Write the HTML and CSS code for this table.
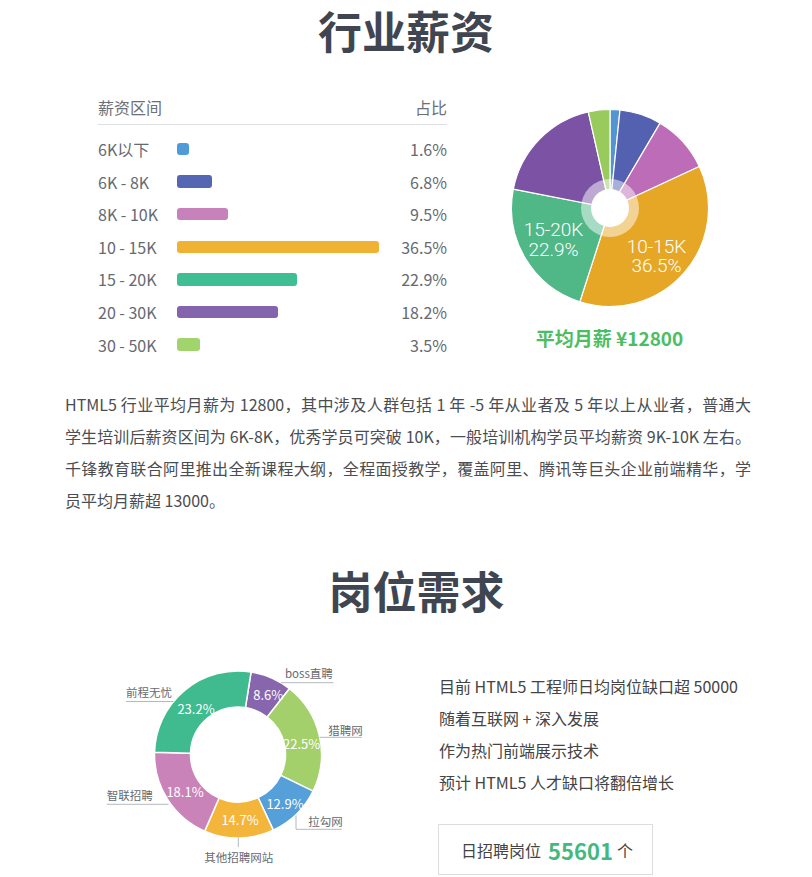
FILE: index.html
```html
<!DOCTYPE html>
<html lang="zh-CN">
<head>
<meta charset="utf-8">
<title>行业薪资 · 岗位需求</title>
<link rel="stylesheet" href="styles.css">
</head>
<body>
<section class="salary">
  <h2 class="title">行业薪资</h2>
  <div class="salary-body">
    <div class="table">
      <div class="thead"><span>薪资区间</span><span>占比</span></div>
      <div class="rows">
        <div class="row"><span class="label">6K以下</span><span class="track"><span class="bar c-blue" style="width:12px"></span></span><span class="pct">1.6%</span></div>
        <div class="row"><span class="label">6K - 8K</span><span class="track"><span class="bar c-indigo" style="width:35.3px"></span></span><span class="pct">6.8%</span></div>
        <div class="row"><span class="label">8K - 10K</span><span class="track"><span class="bar c-pink" style="width:51px"></span></span><span class="pct">9.5%</span></div>
        <div class="row"><span class="label">10 - 15K</span><span class="track"><span class="bar c-orange" style="width:202px"></span></span><span class="pct">36.5%</span></div>
        <div class="row"><span class="label">15 - 20K</span><span class="track"><span class="bar c-teal" style="width:120.3px"></span></span><span class="pct">22.9%</span></div>
        <div class="row"><span class="label">20 - 30K</span><span class="track"><span class="bar c-purple" style="width:101.3px"></span></span><span class="pct">18.2%</span></div>
        <div class="row"><span class="label">30 - 50K</span><span class="track"><span class="bar c-lime" style="width:22.7px"></span></span><span class="pct">3.5%</span></div>
      </div>
    </div>
    <div class="pie-box">
      <svg class="pie" width="220" height="220" viewBox="499.5 98.3 220 220">
        <g class="pie-slices">
          <path class="p-blue" d="M609.5 208.3 L609.5 109.8 A98.5 98.5 0 0 1 619.49 110.31 Z"/>
          <path class="p-indigo" d="M609.5 208.3 L619.49 110.31 A98.5 98.5 0 0 1 659.57 123.47 Z"/>
          <path class="p-pink" d="M609.5 208.3 L659.57 123.47 A98.5 98.5 0 0 1 698.84 166.81 Z"/>
          <path class="p-orange" d="M609.5 208.3 L698.84 166.81 A98.5 98.5 0 0 1 579.35 302.07 Z"/>
          <path class="p-green" d="M609.5 208.3 L579.35 302.07 A98.5 98.5 0 0 1 512.84 189.35 Z"/>
          <path class="p-purple" d="M609.5 208.3 L512.84 189.35 A98.5 98.5 0 0 1 587.79 112.22 Z"/>
          <path class="p-lime" d="M609.5 208.3 L587.79 112.22 A98.5 98.5 0 0 1 609.5 109.8 Z"/>
        </g>
        <circle class="pie-ring" cx="609.5" cy="208.3" r="29"/>
        <circle class="pie-hole" cx="609.5" cy="208.3" r="19"/>
        <text class="pie-label" x="553" y="229"><tspan x="553">15-20K</tspan><tspan x="553" dy="20">22.9%</tspan></text>
        <text class="pie-label" x="656" y="246"><tspan x="656">10-15K</tspan><tspan x="656" dy="19.5">36.5%</tspan></text>
      </svg>
      <p class="avg">平均月薪 ¥12800</p>
    </div>
  </div>
  <p class="desc"><span class="line">HTML5 行业平均月薪为 12800，其中涉及人群包括 1 年 -5 年从业者及 5 年以上从业者，普通大</span><span class="line">学生培训后薪资区间为 6K-8K，优秀学员可突破 10K，一般培训机构学员平均薪资 9K-10K 左右。</span><span class="line">千锋教育联合阿里推出全新课程大纲，全程面授教学，覆盖阿里、腾讯等巨头企业前端精华，学</span><span class="line last">员平均月薪超 13000。</span></p>
</section>

<section class="jobs">
  <h2 class="title title-jobs">岗位需求</h2>
  <div class="jobs-body">
    <svg class="donut" width="270" height="217" viewBox="100 660 270 217">
      <g class="donut-slices">
        <path class="d-purple" d="M251.06 672.03 A83.5 83.5 0 0 1 289.41 688.70 L267.25 717.07 A47.5 47.5 0 0 0 245.43 707.58 Z"/>
        <path class="d-lime" d="M289.41 688.70 A83.5 83.5 0 0 1 313.05 791.11 L280.69 775.32 A47.5 47.5 0 0 0 267.25 717.07 Z"/>
        <path class="d-blue" d="M313.05 791.11 A83.5 83.5 0 0 1 273.29 830.18 L258.07 797.55 A47.5 47.5 0 0 0 280.69 775.32 Z"/>
        <path class="d-orange" d="M273.29 830.18 A83.5 83.5 0 0 1 204.71 831.08 L219.06 798.06 A47.5 47.5 0 0 0 258.07 797.55 Z"/>
        <path class="d-pink" d="M204.71 831.08 A83.5 83.5 0 0 1 154.53 752.31 L190.52 753.26 A47.5 47.5 0 0 0 219.06 798.06 Z"/>
        <path class="d-teal" d="M154.53 752.31 A83.5 83.5 0 0 1 251.06 672.03 L245.43 707.58 A47.5 47.5 0 0 0 190.52 753.26 Z"/>
      </g>
      <g class="donut-values">
        <text x="196" y="708.3">23.2%</text>
        <text x="268.3" y="694.3">8.6%</text>
        <text x="301.7" y="743.3">22.5%</text>
        <text x="285" y="803.3">12.9%</text>
        <text x="240" y="819.3">14.7%</text>
        <text x="185" y="791.7">18.1%</text>
      </g>
      <g class="donut-lines">
        <path d="M281 682.7 H333.5"/>
        <path d="M319.5 737.3 H361.7"/>
        <path d="M126 701.5 H173.5"/>
        <path d="M106.7 804.3 H168.5"/>
        <path d="M296 815.5 V829.3 H341.7"/>
        <path d="M238.3 837.5 V847"/>
      </g>
      <g class="donut-names">
        <text x="285" y="673.3">boss直聘</text>
        <text x="328.3" y="729.5">猎聘网</text>
        <text x="126" y="691.5">前程无忧</text>
        <text x="106.7" y="795">智联招聘</text>
        <text x="308.3" y="820.5">拉勾网</text>
        <text class="mid" x="238.8" y="856.5">其他招聘网站</text>
      </g>
    </svg>
    <div class="jobs-info">
      <ul class="jobs-list">
        <li>目前 HTML5 工程师日均岗位缺口超 50000</li>
        <li>随着互联网 + 深入发展</li>
        <li>作为热门前端展示技术</li>
        <li>预计 HTML5 人才缺口将翻倍增长</li>
      </ul>
      <div class="daily"><span>日招聘岗位</span><strong>55601</strong><span>个</span></div>
    </div>
  </div>
</section>
</body>
</html>
```

FILE: styles.css
```css
* {
  box-sizing: border-box;
}

body {
  margin: 0;
  font-family: "Noto Sans CJK SC", "Noto Sans", sans-serif;
  color: #444;
  background: #fff;
}

.title {
  margin: 1.5px 0 0;
  font-size: 44px;
  line-height: 56px;
  font-weight: 700;
  color: #3f4651;
  text-align: center;
}

/* ---------- salary ---------- */
.salary-body {
  display: flex;
  align-items: flex-start;
  margin-top: 37.5px;
  padding-left: 98px;
}

.table {
  width: 349px;
}

.thead {
  display: flex;
  justify-content: space-between;
  font-size: 16px;
  line-height: 24px;
  padding-bottom: 5px;
  border-bottom: 1px solid #dcdfe3;
  color: #6b7079;
}

.rows {
  padding-top: 7.7px;
}

.row {
  display: grid;
  grid-template-columns: 79px 1fr 60px;
  align-items: center;
  height: 32.6px;
  font-size: 16px;
  line-height: 24px;
  color: #656a72;
}

.track {
  display: flex;
  align-items: center;
}

.bar {
  display: block;
  height: 12.4px;
  border-radius: 3px;
}

.pct {
  text-align: right;
}

.c-blue { background: #4f9bd9; }
.c-indigo { background: #5566b3; }
.c-pink { background: #c882bb; }
.c-orange { background: #f0b232; }
.c-teal { background: #3fbd93; }
.c-purple { background: #8465ad; }
.c-lime { background: #a2d46e; }

.pie-box {
  width: 220px;
  margin: 3.3px 0 0 52.5px;
  display: flex;
  flex-direction: column;
  align-items: center;
}

.pie {
  display: block;
}

.pie-slices path {
  stroke: #fff;
  stroke-width: 1.2;
  stroke-linejoin: round;
}

.p-blue { fill: #5594d3; }
.p-indigo { fill: #5361b0; }
.p-pink { fill: #bd6db7; }
.p-orange { fill: #e6a726; }
.p-green { fill: #50b787; }
.p-purple { fill: #7b52a4; }
.p-lime { fill: #98ca5c; }

.pie-ring {
  fill: #fff;
  fill-opacity: 0.5;
}

.pie-hole {
  fill: #fff;
}

.pie-label {
  fill: #fff;
  font-family: "Roboto", "Lato", "Noto Sans CJK SC", sans-serif;
  font-size: 19px;
  font-weight: 300;
  text-anchor: middle;
  dominant-baseline: central;
}

.avg {
  margin: 7.7px 0 0;
  font-size: 19px;
  line-height: 24px;
  font-weight: 700;
  color: #4bbd63;
  white-space: nowrap;
}

.desc {
  margin: 27px 0 0 65px;
  width: 686px;
  font-size: 16px;
  line-height: 32px;
  color: #4a4d52;
}

.desc .line {
  display: block;
  white-space: nowrap;
  text-align: justify;
  text-align-last: justify;
}

.desc .last {
  text-align: left;
  text-align-last: left;
}

/* ---------- jobs ---------- */
.title-jobs {
  margin-top: 46px;
  padding-left: 21px;
}

.jobs-body {
  display: flex;
  align-items: flex-start;
  margin-top: 42px;
  padding-left: 100px;
}

.donut {
  display: block;
}

.donut-slices path {
  stroke: #fff;
  stroke-width: 1.5;
  stroke-linejoin: round;
}

.d-purple { fill: #8766ad; }
.d-lime { fill: #a4d06c; }
.d-blue { fill: #55a0d8; }
.d-orange { fill: #f3b53a; }
.d-pink { fill: #c983b9; }
.d-teal { fill: #3fbb8f; }

.donut-values text {
  fill: #fff;
  font-size: 13px;
  text-anchor: middle;
  dominant-baseline: central;
}

.donut-lines path {
  fill: none;
  stroke: #b4b8bd;
  stroke-width: 1;
}

.donut-names text {
  fill: #666a71;
  font-size: 11.5px;
  dominant-baseline: central;
}

.donut-names .mid {
  text-anchor: middle;
}

.jobs-info {
  margin-left: 68px;
  padding-top: 9.7px;
}

.jobs-list {
  list-style: none;
  margin: 0;
  padding: 0 0 0 1px;
  font-size: 16px;
  line-height: 32px;
  color: #444;
}

.daily {
  display: flex;
  align-items: center;
  width: 215px;
  height: 51px;
  margin-top: 26.6px;
  padding-left: 22px;
  border: 1px solid #ddd;
  font-size: 16px;
  color: #444;
}

.daily strong {
  margin: 0 4px 0 7px;
  font-size: 22px;
  font-weight: 700;
  color: #43b97f;
}
```
